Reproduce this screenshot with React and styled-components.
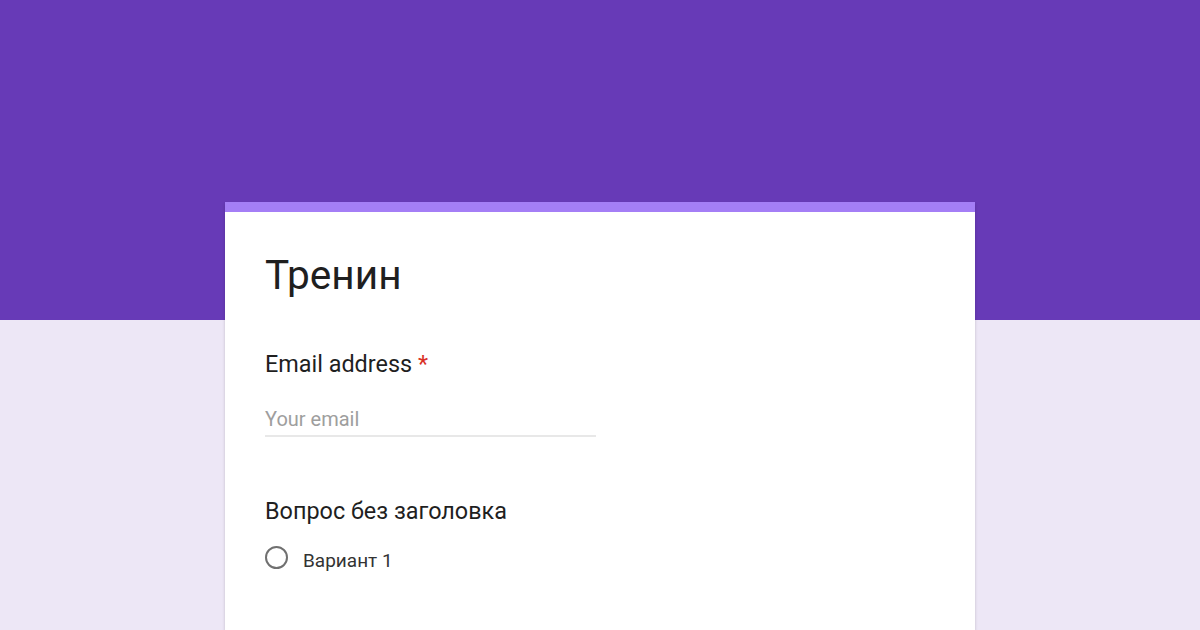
import React from "react";
import styled, { createGlobalStyle } from "styled-components";

const Global = createGlobalStyle`
  html, body { margin: 0; padding: 0; }
  body { font-family: Roboto, "Noto Sans", Arial, sans-serif; }
`;

const Page = styled.div`
  width: 1200px;
  height: 630px;
  overflow: hidden;
  background: linear-gradient(to bottom, #673ab7 0, #673ab7 320px, #ede7f6 320px, #ede7f6 100%);
  display: flex;
  justify-content: center;
  padding-top: 202px;
  box-sizing: border-box;
`;

const Card = styled.div`
  width: 750px;
  background: #fff;
  border-top: 10px solid #a47ef6;
  box-shadow: 0 2px 3px rgba(0, 0, 0, 0.18);
  padding: 39px 40px 0 40px;
  box-sizing: border-box;
  display: flex;
  flex-direction: column;
`;

const Title = styled.h1`
  margin: 0;
  font-size: 40.6px;
  font-weight: 400;
  line-height: 48px;
  color: #1f1f1f;
`;

const Question = styled.div`
  display: flex;
  flex-direction: column;
  margin-top: ${(p) => p.$mt}px;
`;

const Label = styled.div`
  font-size: 23.4px;
  line-height: 28px;
  color: #1f1f1f;
`;

const Req = styled.span`
  color: #d93025;
  margin-left: 6px;
`;

const Input = styled.div`
  margin-top: 28px;
  width: 331px;
  border-bottom: 2px solid #e8e8e8;
  font-size: 20px;
  line-height: 26px;
  padding-bottom: 3px;
  color: #9e9e9e;
`;

const Option = styled.label`
  display: flex;
  align-items: flex-start;
  margin-top: 21px;
  gap: 15px;
  color: #333;
`;

const Radio = styled.span`
  box-sizing: border-box;
  width: 23px;
  height: 23px;
  border: 2px solid #707070;
  border-radius: 50%;
  flex: none;
`;

const OptionText = styled.span`
  font-size: 19px;
  line-height: 23px;
  padding-top: 3px;
`;

export default function App() {
  return (
    <>
      <Global />
      <Page>
        <Card>
          <Title>Тренин</Title>
          <Question $mt={51}>
            <Label>
              Email address<Req>*</Req>
            </Label>
            <Input>Your email</Input>
          </Question>
          <Question $mt={60}>
            <Label>Вопрос без заголовка</Label>
            <Option>
              <Radio />
              <OptionText>Вариант 1</OptionText>
            </Option>
          </Question>
        </Card>
      </Page>
    </>
  );
}
